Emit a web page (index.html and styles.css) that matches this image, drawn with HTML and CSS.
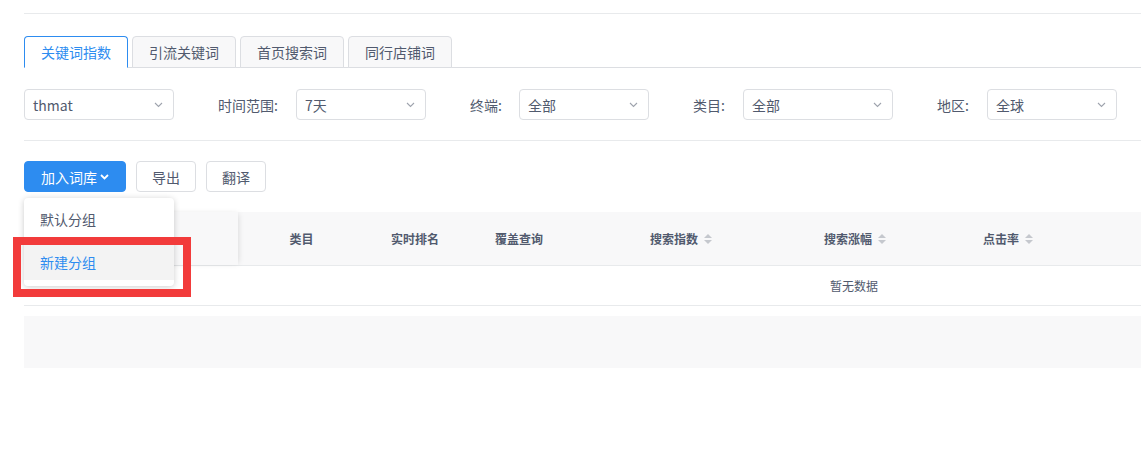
FILE: index.html
```html
<!DOCTYPE html>
<html>
<head>
<meta charset="UTF-8">
<meta name="viewport" content="width=device-width, initial-scale=1.0">
<title>关键词指数</title>
<link rel="stylesheet" href="styles.css">
</head>
<body>
<div class="page">
    <div class="topline"></div>

    <div class="tabs">
        <div class="tab active">关键词指数</div>
        <div class="tab">引流关键词</div>
        <div class="tab">首页搜索词</div>
        <div class="tab">同行店铺词</div>
    </div>

    <div class="filters">
        <div class="select w150"><span>thmat</span><svg class="arrow" width="9" height="6" viewBox="0 0 9 6"><path d="M1 1 L4.5 4.5 L8 1" fill="none" stroke="#9ea3ad" stroke-width="1.1"/></svg></div>
        <div class="field">
            <label class="lbl l78">时间范围:</label>
            <div class="select w130"><span>7天</span><svg class="arrow" width="9" height="6" viewBox="0 0 9 6"><path d="M1 1 L4.5 4.5 L8 1" fill="none" stroke="#9ea3ad" stroke-width="1.1"/></svg></div>
        </div>
        <div class="field">
            <label class="lbl l49">终端:</label>
            <div class="select w130"><span>全部</span><svg class="arrow" width="9" height="6" viewBox="0 0 9 6"><path d="M1 1 L4.5 4.5 L8 1" fill="none" stroke="#9ea3ad" stroke-width="1.1"/></svg></div>
        </div>
        <div class="field">
            <label class="lbl l50">类目:</label>
            <div class="select w150"><span>全部</span><svg class="arrow" width="9" height="6" viewBox="0 0 9 6"><path d="M1 1 L4.5 4.5 L8 1" fill="none" stroke="#9ea3ad" stroke-width="1.1"/></svg></div>
        </div>
        <div class="field">
            <label class="lbl l50">地区:</label>
            <div class="select w130"><span>全球</span><svg class="arrow" width="9" height="6" viewBox="0 0 9 6"><path d="M1 1 L4.5 4.5 L8 1" fill="none" stroke="#9ea3ad" stroke-width="1.1"/></svg></div>
        </div>
    </div>

    <div class="divider"></div>

    <div class="actions">
        <div class="dropdown">
            <button class="btn primary">加入词库<svg width="9" height="6" viewBox="0 0 9 6"><path d="M1 1 L4.5 4.5 L8 1" fill="none" stroke="#fff" stroke-width="1.8"/></svg></button>
            <ul class="menu">
                <li>默认分组</li>
                <li class="hover">新建分组</li>
            </ul>
            <div class="mark"></div>
        </div>
        <button class="btn">导出</button>
        <button class="btn">翻译</button>
    </div>

    <div class="table">
        <div class="thead">
            <div class="th fixed"></div>
            <div class="th c127">类目</div>
            <div class="th c100">实时排名</div>
            <div class="th c108">覆盖查询</div>
            <div class="th c216">搜索指数<span class="sort"><i class="up"></i><i class="down"></i></span></div>
            <div class="th c132">搜索涨幅<span class="sort"><i class="up"></i><i class="down"></i></span></div>
            <div class="th c174">点击率<span class="sort"><i class="up"></i><i class="down"></i></span></div>
        </div>
        <div class="empty">暂无数据</div>
    </div>

    <div class="footer-block"></div>
</div>
</body>
</html>
```

FILE: styles.css
```css
:root {
    --primary: #2d8cf0;
    --text: #515a6e;
    --border: #dcdee2;
    --line: #e8eaec;
}
body {
    margin: 0;
    font-family: "Microsoft YaHei", "Noto Sans CJK SC", "Noto Sans", sans-serif;
    color: var(--text);
    font-size: 14px;
    background: #fff;
}
.page {
    padding: 13px 0 0 24px;
    overflow: hidden;
    height: 460px;
}
.topline {
    border-top: 1px solid var(--line);
}
.tabs {
    margin-top: 22px;
    display: flex;
    gap: 4px;
    border-bottom: 1px solid var(--border);
}
.tab {
    box-sizing: border-box;
    width: 104px;
    height: 32px;
    margin-bottom: -1px;
    border: 1px solid var(--border);
    border-radius: 4px 4px 0 0;
    background: #f8f8f9;
    display: flex;
    align-items: center;
    justify-content: center;
    line-height: 1;
}
.tab.active {
    background: #fff;
    border-color: var(--primary);
    border-bottom-color: #fff;
    color: var(--primary);
}
.filters {
    margin-top: 21px;
    display: flex;
    gap: 44px;
}
.field {
    display: flex;
    align-items: center;
}
.lbl { flex: none; }
.l78 { width: 78px; }
.l49 { width: 49px; }
.l50 { width: 50px; }
.select {
    box-sizing: border-box;
    height: 31px;
    border: 1px solid var(--border);
    border-radius: 4px;
    display: flex;
    align-items: center;
    justify-content: space-between;
    padding: 0 10px 0 8px;
}
.w150 { width: 150px; }
.w130 { width: 130px; }
.divider {
    margin-top: 20px;
    border-top: 1px solid var(--line);
}
.actions {
    margin-top: 20px;
    display: flex;
    gap: 10px;
}
.btn {
    box-sizing: border-box;
    height: 31px;
    width: 60px;
    padding: 0;
    border: 1px solid var(--border);
    border-radius: 4px;
    background: #fff;
    color: var(--text);
    font-family: inherit;
    font-size: 14px;
    display: flex;
    align-items: center;
    justify-content: center;
}
.btn.primary {
    width: 102px;
    background: var(--primary);
    border-color: var(--primary);
    color: #fff;
    gap: 3px;
}
.dropdown {
    position: relative;
}
.menu {
    position: absolute;
    top: 37px;
    left: 0;
    z-index: 10;
    width: 150px;
    margin: 0;
    padding: 4px 0 6px;
    list-style: none;
    background: #fff;
    border-radius: 4px;
    box-shadow: 0 1px 6px rgba(0, 0, 0, .2);
}
.menu li {
    height: 35px;
    line-height: 35px;
    padding-left: 16px;
}
.menu li + li {
    margin-top: 8px;
}
.menu li.hover {
    background: #f3f3f3;
    color: var(--primary);
}
.mark {
    position: absolute;
    z-index: 11;
    left: -11px;
    top: 76px;
    width: 178px;
    height: 60px;
    box-sizing: border-box;
    border: 8px solid #f23b3b;
}
.table {
    margin-top: 20px;
    font-size: 12px;
}
.thead {
    display: flex;
    height: 53px;
    background: #f8f8f9;
    border-bottom: 1px solid var(--line);
}
.th {
    flex: none;
    display: flex;
    align-items: center;
    justify-content: center;
    font-weight: bold;
}
.th.fixed {
    width: 214px;
    box-shadow: 2px 0 6px -2px rgba(0, 0, 0, .15);
    position: relative;
}
.c127 { width: 127px; }
.c100 { width: 100px; }
.c108 { width: 108px; }
.c216 { width: 216px; }
.c132 { width: 132px; }
.c174 { width: 174px; }
.sort {
    display: inline-flex;
    flex-direction: column;
    gap: 2px;
    margin-left: 6px;
}
.sort i {
    width: 0;
    height: 0;
    border-left: 4px solid transparent;
    border-right: 4px solid transparent;
}
.sort .up { border-bottom: 4px solid #c5c8ce; }
.sort .down { border-top: 4px solid #c5c8ce; }
.empty {
    height: 39px;
    line-height: 39px;
    padding-left: 806px;
    border-bottom: 1px solid var(--line);
}
.footer-block {
    margin-top: 10px;
    height: 52px;
    background: #f8f8f9;
}
```
